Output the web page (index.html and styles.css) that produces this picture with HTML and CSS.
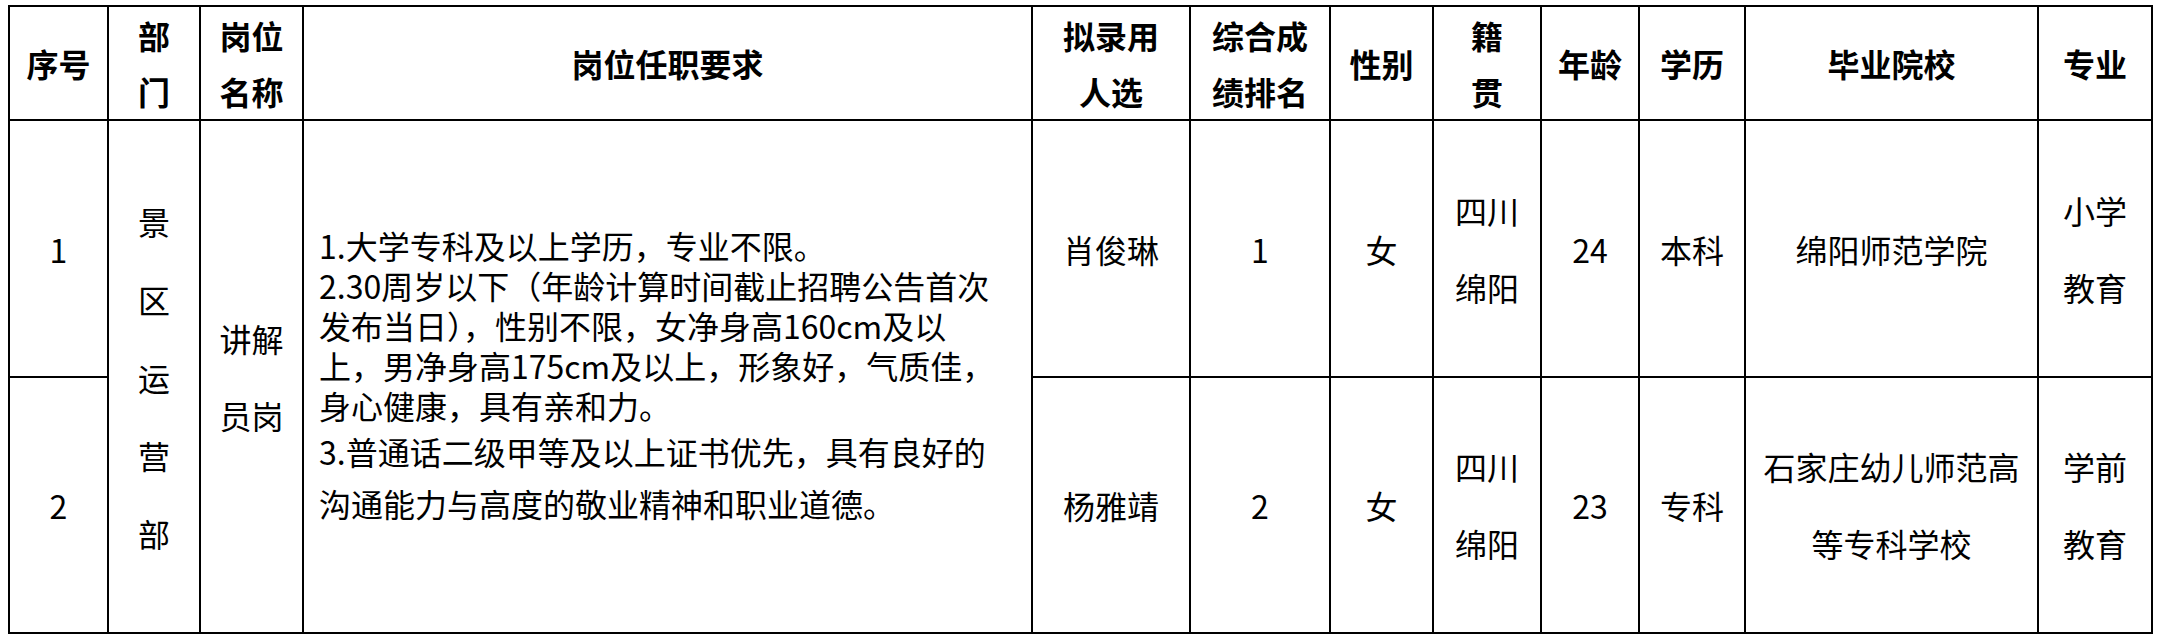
FILE: index.html
```html
<!DOCTYPE html>
<html lang="zh-CN">
<head>
<meta charset="utf-8">
<title>拟录用人员名单</title>
<link rel="stylesheet" href="styles.css">
</head>
<body>
<table class="roster">
  <colgroup>
    <col class="c-no">
    <col class="c-dept">
    <col class="c-post">
    <col class="c-req">
    <col class="c-name">
    <col class="c-rank">
    <col class="c-sex">
    <col class="c-home">
    <col class="c-age">
    <col class="c-edu">
    <col class="c-school">
    <col class="c-major">
  </colgroup>
  <thead>
    <tr class="head-row">
      <th>序号</th>
      <th>部<br>门</th>
      <th>岗位<br>名称</th>
      <th>岗位任职要求</th>
      <th>拟录用<br>人选</th>
      <th>综合成<br>绩排名</th>
      <th>性别</th>
      <th>籍<br>贯</th>
      <th>年龄</th>
      <th>学历</th>
      <th>毕业院校</th>
      <th>专业</th>
    </tr>
  </thead>
  <tbody>
    <tr class="row-1">
      <td>1</td>
      <td rowspan="2" class="tall dept">景<br>区<br>运<br>营<br>部</td>
      <td rowspan="2" class="tall">讲解<br>员岗</td>
      <td rowspan="2" class="req">
        <p class="req-p">1.大学专科及以上学历，专业不限。</p>
        <p class="req-p">2.30周岁以下（年龄计算时间截止招聘公告首次<br>发布当日），性别不限，女净身高160cm及以<br>上，男净身高175cm及以上，形象好，气质佳，<br>身心健康，具有亲和力。</p>
        <p class="req-p loose">3.普通话二级甲等及以上证书优先，具有良好的<br>沟通能力与高度的敬业精神和职业道德。</p>
      </td>
      <td>肖俊琳</td>
      <td>1</td>
      <td>女</td>
      <td class="tall">四川<br>绵阳</td>
      <td>24</td>
      <td>本科</td>
      <td>绵阳师范学院</td>
      <td class="tall">小学<br>教育</td>
    </tr>
    <tr class="row-2">
      <td>2</td>
      <td>杨雅靖</td>
      <td>2</td>
      <td>女</td>
      <td class="tall">四川<br>绵阳</td>
      <td>23</td>
      <td>专科</td>
      <td class="tall">石家庄幼儿师范高<br>等专科学校</td>
      <td class="tall">学前<br>教育</td>
    </tr>
  </tbody>
</table>
</body>
</html>
```

FILE: styles.css
```css
html, body {
  background: #ffffff;
}

body {
  margin: 5px 8px;
  font-family: "Noto Sans CJK SC", "Microsoft YaHei", sans-serif;
  color: #000000;
}

.roster {
  border-collapse: collapse;
  table-layout: fixed;
  width: 2145px;
  font-size: 32px;
}

.c-no { width: 99px; }
.c-dept { width: 92px; }
.c-post { width: 103px; }
.c-req { width: 729px; }
.c-name { width: 158px; }
.c-rank { width: 140px; }
.c-sex { width: 103px; }
.c-home { width: 108px; }
.c-age { width: 98px; }
.c-edu { width: 106px; }
.c-school { width: 293px; }
.c-major { width: 114px; }

.roster th,
.roster td {
  border: 2px solid #000000;
  padding: 0;
  text-align: center;
  vertical-align: middle;
  white-space: nowrap;
}

.roster th {
  font-weight: 700;
  line-height: 56px;
}

.roster td {
  font-weight: 400;
  line-height: 40px;
}

.head-row { height: 114px; }
.row-1 { height: 257px; }
.row-2 { height: 256px; }

.roster td.tall {
  line-height: 77px;
}

.roster td.dept {
  line-height: 78px;
}

.roster td.req {
  text-align: left;
  padding-left: 15px;
}

.req-p {
  margin: 0;
  line-height: 40px;
}

.req-p.loose {
  line-height: 52px;
}
```
